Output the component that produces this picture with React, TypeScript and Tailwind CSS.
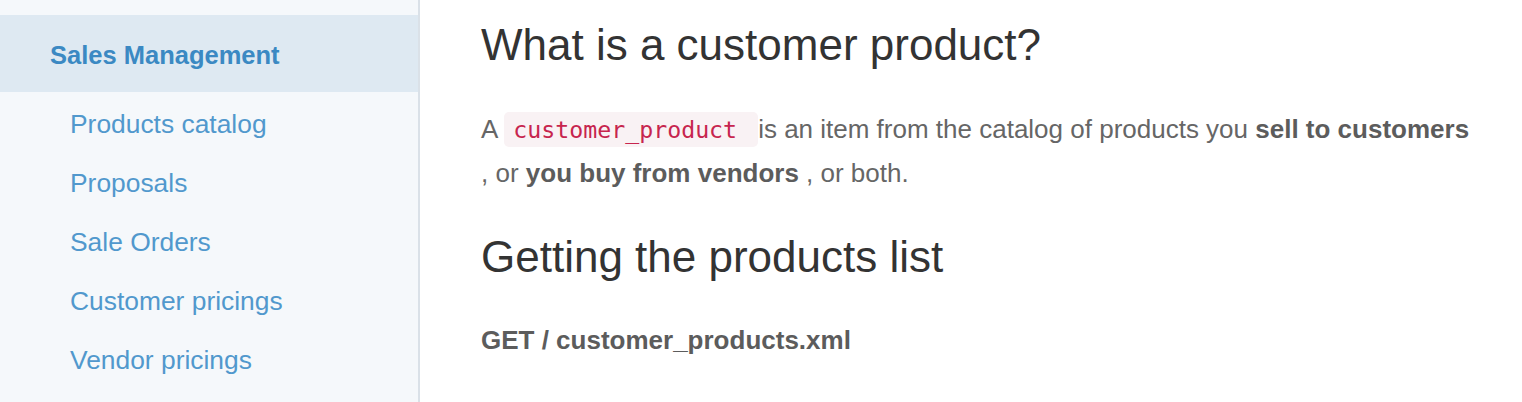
const sections = [
  {
    title: 'Sales Management',
    items: ['Products catalog', 'Proposals', 'Sale Orders', 'Customer pricings', 'Vendor pricings'],
  },
];

function Sidebar() {
  return (
    <aside className="w-[420px] shrink-0 bg-[#f5f8fb] border-r-2 border-[#dae1e8] pt-[15px]">
      {sections.map((section) => (
        <div key={section.title}>
          <div className="h-[77px] bg-[#dee9f2] pl-[50px] pt-[4px]">
            <a href="#" className="block text-[25.5px] leading-[72px] font-bold text-[#3b89c3]">
              {section.title}
            </a>
          </div>
          <ul className="pt-[3px]">
            {section.items.map((item) => (
              <li key={item}>
                <a href="#" className="block pl-[70px] text-[26.4px] leading-[59px] text-[#5198cd]">
                  {item}
                </a>
              </li>
            ))}
          </ul>
        </div>
      ))}
    </aside>
  );
}

export default function App() {
  return (
    <div className="flex h-[402px] overflow-hidden bg-white font-['Liberation_Sans',Arial,sans-serif]">
      <Sidebar />
      <main className="flex-1 pl-[61px] pr-[42px] pt-[21px]">
        <h1 className="text-[44px] leading-[48px] text-[#333333]">What is a customer product?</h1>

        <p className="mt-[38px] text-[26px] leading-[44px] text-[#666666]">
          A{' '}
          <code className="rounded-[5px] bg-[#f9f2f4] py-[4px] pl-[9px] pr-[21px] font-['DejaVu_Sans_Mono',monospace] text-[23.25px] leading-none text-[#c7254e]">
            customer_product
          </code>
          is an item from the catalog of products you <strong className="text-[#5c5c5c]">sell to customers</strong> , or{' '}
          <strong className="text-[#5c5c5c]">you buy from vendors</strong> , or both.
        </p>

        <h2 className="mt-[38px] text-[44px] leading-[48px] text-[#333333]">Getting the products list</h2>

        <p className="mt-[37px] text-[26px] leading-[44px] font-bold text-[#5c5c5c]">GET / customer_products.xml</p>
      </main>
    </div>
  );
}
